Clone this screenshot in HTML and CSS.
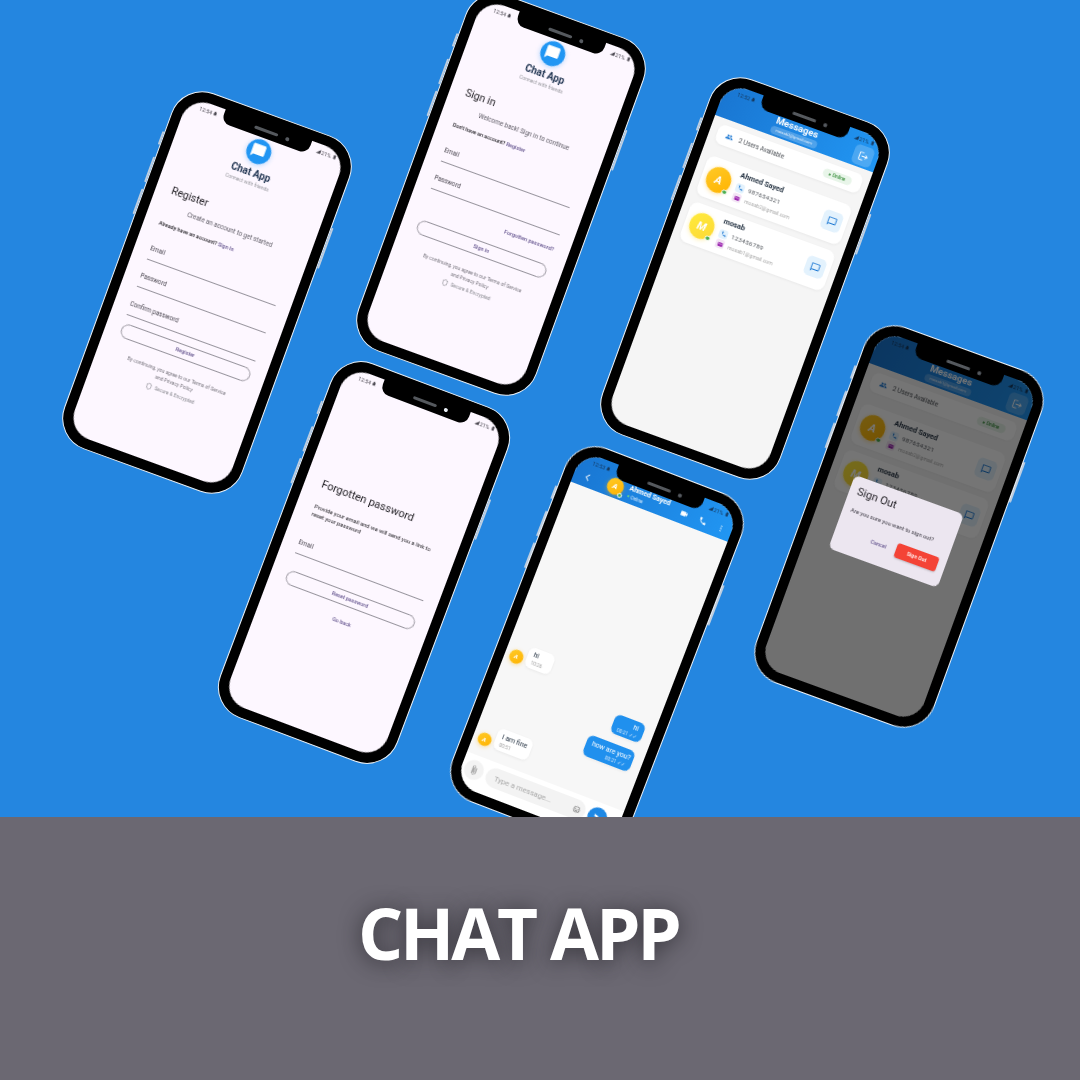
FILE: index.html
```html
<!DOCTYPE html>
<html lang="en">
<head>
    <meta charset="UTF-8">
    <title>Chat App</title>
    <link rel="stylesheet" href="styles.css">
</head>
<body>
    <!-- shared icons -->
    <svg class="icon-defs" xmlns="http://www.w3.org/2000/svg">
        <symbol id="i-bubble" viewBox="0 0 24 24"><path d="M20 2H4c-1.1 0-2 .9-2 2v18l4-4h14c1.1 0 2-.9 2-2V4c0-1.1-.9-2-2-2z"/></symbol>
        <symbol id="i-chat" viewBox="0 0 24 24"><path d="M20 2H4c-1.1 0-2 .9-2 2v18l4-4h14c1.1 0 2-.9 2-2V4c0-1.1-.9-2-2-2zm0 14H6l-2 2V4h16v12z"/></symbol>
        <symbol id="i-logout" viewBox="0 0 24 24"><path d="M17 7l-1.41 1.41L18.17 11H8v2h10.17l-2.58 2.58L17 17l5-5zM4 5h8V3H4c-1.1 0-2 .9-2 2v14c0 1.1.9 2 2 2h8v-2H4V5z"/></symbol>
        <symbol id="i-people" viewBox="0 0 24 24"><path d="M16 11c1.66 0 2.99-1.34 2.99-3S17.66 5 16 5c-1.66 0-3 1.34-3 3s1.34 3 3 3zm-8 0c1.66 0 2.99-1.34 2.99-3S9.66 5 8 5C6.34 5 5 6.34 5 8s1.34 3 3 3zm0 2c-2.33 0-7 1.17-7 3.5V19h14v-2.5c0-2.33-4.67-3.5-7-3.5zm8 0c-.29 0-.62.02-.97.05 1.16.84 1.97 1.97 1.97 3.45V19h6v-2.5c0-2.33-4.67-3.5-7-3.5z"/></symbol>
        <symbol id="i-phone" viewBox="0 0 24 24"><path d="M6.62 10.79c1.44 2.83 3.76 5.14 6.59 6.59l2.2-2.2c.27-.27.67-.36 1.02-.24 1.12.37 2.33.57 3.57.57.55 0 1 .45 1 1V20c0 .55-.45 1-1 1-9.39 0-17-7.61-17-17 0-.55.45-1 1-1h3.5c.55 0 1 .45 1 1 0 1.25.2 2.45.57 3.57.11.35.03.74-.25 1.02l-2.2 2.2z"/></symbol>
        <symbol id="i-mail" viewBox="0 0 24 24"><path d="M20 4H4c-1.1 0-1.99.9-1.99 2L2 18c0 1.1.9 2 2 2h16c1.1 0 2-.9 2-2V6c0-1.1-.9-2-2-2zm0 4l-8 5-8-5V6l8 5 8-5v2z"/></symbol>
        <symbol id="i-video" viewBox="0 0 24 24"><path d="M17 10.5V7c0-.55-.45-1-1-1H4c-.55 0-1 .45-1 1v10c0 .55.45 1 1 1h12c.55 0 1-.45 1-1v-3.5l4 4v-11l-4 4z"/></symbol>
        <symbol id="i-more" viewBox="0 0 24 24"><circle cx="12" cy="5" r="2"/><circle cx="12" cy="12" r="2"/><circle cx="12" cy="19" r="2"/></symbol>
        <symbol id="i-back" viewBox="0 0 24 24"><path d="M15.5 3.5 7 12l8.5 8.5-1.8 1.8L3.4 12 13.7 1.7z"/></symbol>
        <symbol id="i-attach" viewBox="0 0 24 24"><path d="M16.5 6v11.5c0 2.21-1.79 4-4 4s-4-1.79-4-4V5c0-1.38 1.12-2.5 2.5-2.5s2.5 1.12 2.5 2.5v10.5c0 .55-.45 1-1 1s-1-.45-1-1V6H10v9.5c0 1.38 1.12 2.5 2.5 2.5s2.5-1.12 2.5-2.5V5c0-2.21-1.79-4-4-4S7 2.79 7 5v12.5c0 3.04 2.46 5.5 5.5 5.5s5.5-2.46 5.5-5.5V6h-1.5z"/></symbol>
        <symbol id="i-smile" viewBox="0 0 24 24"><path d="M12 2a10 10 0 1 0 0 20 10 10 0 0 0 0-20zm0 18a8 8 0 1 1 0-16 8 8 0 0 1 0 16z"/><circle cx="8.5" cy="9.5" r="1.5"/><circle cx="15.5" cy="9.5" r="1.5"/><path d="M12 17.5c2.3 0 4.3-1.5 5.1-3.5H6.9c.8 2 2.8 3.5 5.1 3.5z"/></symbol>
        <symbol id="i-send" viewBox="0 0 24 24"><path d="M2.01 21 23 12 2.01 3 2 10l15 2-15 2z"/></symbol>
        <symbol id="i-shield" viewBox="0 0 24 24"><path d="M12 1 3 5v6c0 5.55 3.84 10.74 9 12 5.16-1.26 9-6.45 9-12V5l-9-4zm0 2.2 7 3.1V11c0 4.5-3 8.7-7 9.9-4-1.2-7-5.4-7-9.9V6.3z"/></symbol>
        <symbol id="i-bell" viewBox="0 0 24 24"><path d="M12 22c1.1 0 2-.9 2-2h-4c0 1.1.9 2 2 2zm6-6v-5c0-3.07-1.63-5.64-4.5-6.32V4c0-.83-.67-1.5-1.5-1.5s-1.5.67-1.5 1.5v.68C7.64 5.36 6 7.92 6 11v5l-2 2v1h16v-1l-2-2z"/></symbol>
        <symbol id="i-signal" viewBox="0 0 24 24"><path d="M2 22 22 2v20z"/></symbol>
        <symbol id="i-battery" viewBox="0 0 24 24"><path d="M15.67 4H14V2h-4v2H8.33C7.6 4 7 4.6 7 5.33v15.33C7 21.4 7.6 22 8.33 22h7.33c.74 0 1.34-.6 1.34-1.33V5.33C17 4.6 16.4 4 15.67 4z"/></symbol>
    </svg>

    <div class="canvas">

        <!-- register -->
        <div class="phone phone-register">
            <span class="side-btn side-mute"></span><span class="side-btn side-up"></span><span class="side-btn side-down"></span><span class="side-btn side-power"></span>
            <div class="notch"><span class="speaker"></span><span class="camera"></span></div>
            <div class="screen auth">
                <div class="status"><span class="status-item">12:54 <svg class="ico"><use href="#i-bell"/></svg></span><span class="status-item"><svg class="ico"><use href="#i-signal"/></svg> 21% <svg class="ico"><use href="#i-battery"/></svg></span></div>
                <div class="brand">
                    <div class="logo"><svg><use href="#i-bubble"/></svg></div>
                    <div class="brand-name">Chat App</div>
                    <div class="brand-sub">Connect with friends</div>
                </div>
                <div class="auth-title">Register</div>
                <div class="auth-sub">Create an account to get started</div>
                <div class="auth-switch">Already have an account? <a>Sign In</a></div>
                <div class="fields">
                    <div class="field">Email</div>
                    <div class="field">Password</div>
                    <div class="field">Confirm password</div>
                </div>
                <div class="outline-btn btn-register">Register</div>
                <div class="terms terms-register">By continuing, you agree to our Terms of Service<br>and Privacy Policy</div>
                <div class="secure"><svg class="ico"><use href="#i-shield"/></svg> Secure &amp; Encrypted</div>
            </div>
        </div>

        <!-- sign in -->
        <div class="phone phone-signin">
            <span class="side-btn side-mute"></span><span class="side-btn side-up"></span><span class="side-btn side-down"></span><span class="side-btn side-power"></span>
            <div class="notch"><span class="speaker"></span><span class="camera"></span></div>
            <div class="screen auth">
                <div class="status"><span class="status-item">12:54 <svg class="ico"><use href="#i-bell"/></svg></span><span class="status-item"><svg class="ico"><use href="#i-signal"/></svg> 21% <svg class="ico"><use href="#i-battery"/></svg></span></div>
                <div class="brand">
                    <div class="logo"><svg><use href="#i-bubble"/></svg></div>
                    <div class="brand-name">Chat App</div>
                    <div class="brand-sub">Connect with friends</div>
                </div>
                <div class="auth-title">Sign in</div>
                <div class="auth-sub">Welcome back! Sign in to continue</div>
                <div class="auth-switch">Don't have an account? <a>Register</a></div>
                <div class="fields">
                    <div class="field">Email</div>
                    <div class="field">Password</div>
                </div>
                <div class="forgot-link">Forgotten password?</div>
                <div class="outline-btn btn-signin">Sign in</div>
                <div class="terms terms-signin">By continuing, you agree to our Terms of Service<br>and Privacy Policy</div>
                <div class="secure secure-signin"><svg class="ico"><use href="#i-shield"/></svg> Secure &amp; Encrypted</div>
            </div>
        </div>

        <!-- messages -->
        <div class="phone phone-messages">
            <span class="side-btn side-mute"></span><span class="side-btn side-up"></span><span class="side-btn side-down"></span><span class="side-btn side-power"></span>
            <div class="notch"><span class="speaker"></span><span class="camera"></span></div>
            <div class="screen list">
                <div class="app-head">
                    <div class="status"><span class="status-item">12:52 <svg class="ico"><use href="#i-bell"/></svg></span><span class="status-item"><svg class="ico"><use href="#i-signal"/></svg> 21% <svg class="ico"><use href="#i-battery"/></svg></span></div>
                    <div class="head-row">
                        <span></span>
                        <div class="head-center">
                            <div class="head-title">Messages</div>
                            <div class="head-chip">mosab2@gmail.com</div>
                        </div>
                        <div class="exit-btn"><svg><use href="#i-logout"/></svg></div>
                    </div>
                </div>
                <div class="users-bar"><svg class="ico users-ico"><use href="#i-people"/></svg><span class="users-text">2 Users Available</span><span class="online-pill">● Online</span></div>
                <div class="user-card">
                    <div class="avatar avatar-amber">A<i class="dot"></i></div>
                    <div class="user-info">
                        <div class="user-name">Ahmed Sayed</div>
                        <div class="user-row"><span class="mini-box box-blue"><svg class="ico"><use href="#i-phone"/></svg></span><span class="user-phone">987654321</span></div>
                        <div class="user-row"><span class="mini-box box-purple"><svg class="ico"><use href="#i-mail"/></svg></span><span class="user-mail">mosab2@gmail.com</span></div>
                    </div>
                    <div class="chat-btn"><svg><use href="#i-chat"/></svg></div>
                </div>
                <div class="user-card">
                    <div class="avatar avatar-yellow">M<i class="dot"></i></div>
                    <div class="user-info">
                        <div class="user-name">mosab</div>
                        <div class="user-row"><span class="mini-box box-blue"><svg class="ico"><use href="#i-phone"/></svg></span><span class="user-phone">123456789</span></div>
                        <div class="user-row"><span class="mini-box box-purple"><svg class="ico"><use href="#i-mail"/></svg></span><span class="user-mail">mosab1@gmail.com</span></div>
                    </div>
                    <div class="chat-btn"><svg><use href="#i-chat"/></svg></div>
                </div>
            </div>
        </div>

        <!-- forgotten password -->
        <div class="phone phone-forgot">
            <span class="side-btn side-mute"></span><span class="side-btn side-up"></span><span class="side-btn side-down"></span><span class="side-btn side-power"></span>
            <div class="notch"><span class="speaker"></span><span class="camera camera-light"></span></div>
            <div class="screen auth">
                <div class="status"><span class="status-item">12:54 <svg class="ico"><use href="#i-bell"/></svg></span><span class="status-item"><svg class="ico"><use href="#i-signal"/></svg> 21% <svg class="ico"><use href="#i-battery"/></svg></span></div>
                <div class="auth-title forgot-title">Forgotten password</div>
                <div class="forgot-text">Provide your email and we will send you a link to<br>reset your password</div>
                <div class="field">Email</div>
                <div class="outline-btn btn-reset">Reset password</div>
                <div class="go-back">Go back</div>
            </div>
        </div>

        <!-- chat -->
        <div class="phone phone-chat">
            <span class="side-btn side-mute"></span><span class="side-btn side-up"></span><span class="side-btn side-down"></span><span class="side-btn side-power"></span>
            <div class="notch"><span class="speaker"></span><span class="camera"></span></div>
            <div class="screen chat">
                <div class="app-head">
                    <div class="status"><span class="status-item">12:53 <svg class="ico"><use href="#i-bell"/></svg></span><span class="status-item"><svg class="ico"><use href="#i-signal"/></svg> 21% <svg class="ico"><use href="#i-battery"/></svg></span></div>
                    <div class="chat-bar">
                        <svg class="ico bar-back"><use href="#i-back"/></svg>
                        <div class="avatar avatar-amber avatar-bar">A<i class="dot"></i></div>
                        <div class="chat-peer">
                            <div class="peer-name">Ahmed Sayed</div>
                            <div class="peer-state"><i></i> Online</div>
                        </div>
                        <svg class="ico bar-video"><use href="#i-video"/></svg>
                        <svg class="ico bar-phone"><use href="#i-phone"/></svg>
                        <svg class="ico bar-more"><use href="#i-more"/></svg>
                    </div>
                </div>
                <div class="msgs">
                    <div class="msg-in msg-first">
                        <div class="avatar avatar-amber avatar-msg">A</div>
                        <div class="bubble bubble-in bubble-w-hi"><span>hi</span><small>10:26</small></div>
                    </div>
                    <div class="msg-out msg-second">
                        <div class="bubble bubble-out bubble-w-sent"><span>hi</span><small>00:21 ✓✓</small></div>
                    </div>
                    <div class="msg-out msg-third">
                        <div class="bubble bubble-out bubble-w-how"><span>how are you?</span><small>00:21 ✓✓</small></div>
                    </div>
                    <div class="msg-in msg-fourth">
                        <div class="avatar avatar-amber avatar-msg">A</div>
                        <div class="bubble bubble-in bubble-w-fine"><span>I am fine</span><small>00:51</small></div>
                    </div>
                </div>
                <div class="composer">
                    <div class="round-btn"><svg class="ico"><use href="#i-attach"/></svg></div>
                    <div class="composer-input"><span>Type a message...</span><svg class="ico"><use href="#i-smile"/></svg></div>
                    <div class="send-btn"><svg class="ico"><use href="#i-send"/></svg></div>
                </div>
            </div>
        </div>

        <!-- sign out dialog -->
        <div class="phone phone-signout">
            <span class="side-btn side-mute"></span><span class="side-btn side-up"></span><span class="side-btn side-down"></span><span class="side-btn side-power"></span>
            <div class="notch"><span class="speaker"></span><span class="camera"></span></div>
            <div class="screen list">
                <div class="app-head">
                    <div class="status"><span class="status-item">12:54 <svg class="ico"><use href="#i-bell"/></svg></span><span class="status-item"><svg class="ico"><use href="#i-signal"/></svg> 21% <svg class="ico"><use href="#i-battery"/></svg></span></div>
                    <div class="head-row">
                        <span></span>
                        <div class="head-center">
                            <div class="head-title">Messages</div>
                            <div class="head-chip">mosab1@gmail.com</div>
                        </div>
                        <div class="exit-btn"><svg><use href="#i-logout"/></svg></div>
                    </div>
                </div>
                <div class="users-bar"><svg class="ico users-ico"><use href="#i-people"/></svg><span class="users-text">2 Users Available</span><span class="online-pill">● Online</span></div>
                <div class="user-card">
                    <div class="avatar avatar-amber">A<i class="dot"></i></div>
                    <div class="user-info">
                        <div class="user-name">Ahmed Sayed</div>
                        <div class="user-row"><span class="mini-box box-blue"><svg class="ico"><use href="#i-phone"/></svg></span><span class="user-phone">987654321</span></div>
                        <div class="user-row"><span class="mini-box box-purple"><svg class="ico"><use href="#i-mail"/></svg></span><span class="user-mail">mosab2@gmail.com</span></div>
                    </div>
                    <div class="chat-btn"><svg><use href="#i-chat"/></svg></div>
                </div>
                <div class="user-card">
                    <div class="avatar avatar-yellow">M<i class="dot"></i></div>
                    <div class="user-info">
                        <div class="user-name">mosab</div>
                        <div class="user-row"><span class="mini-box box-blue"><svg class="ico"><use href="#i-phone"/></svg></span><span class="user-phone">123456789</span></div>
                        <div class="user-row"><span class="mini-box box-purple"><svg class="ico"><use href="#i-mail"/></svg></span><span class="user-mail">mosab1@gmail.com</span></div>
                    </div>
                    <div class="chat-btn"><svg><use href="#i-chat"/></svg></div>
                </div>
                <div class="scrim">
                    <div class="dialog">
                        <div class="dialog-title">Sign Out</div>
                        <div class="dialog-text">Are you sure you want to sign out?</div>
                        <div class="dialog-actions">
                            <span class="dialog-cancel">Cancel</span>
                            <span class="dialog-ok">Sign Out</span>
                        </div>
                    </div>
                </div>
            </div>
        </div>
    </div>

    <div class="banner">
        <h1>CHAT APP</h1>
    </div>
</body>
</html>
```
FILE: styles.css
```css
* {
    box-sizing: border-box;
}
body {
    margin: 0;
    width: 1080px;
    height: 1080px;
    overflow: hidden;
    background: #2486e0;
    font-family: Roboto, 'Liberation Sans', sans-serif;
}
.icon-defs {
    display: none;
}
.canvas {
    position: relative;
    height: 817px;
    overflow: hidden;
}
.banner {
    height: 263px;
    background: #6b6872;
    padding: 76px 0 0 358px;
}
.banner h1 {
    margin: 0;
    color: #fff;
    font-family: 'Open Sans', sans-serif;
    font-size: 71px;
    line-height: 80px;
    font-weight: 700;
    letter-spacing: -3.2px;
    text-shadow: 0 2px 22px rgba(30, 28, 34, 0.75);
}

/* phone shell */
.phone {
    position: absolute;
    width: 190px;
    height: 379px;
    padding: 10px;
    background: #000;
    border: 1px solid #eaf0f6;
    border-radius: 33px;
    transform: rotate(20deg);
}
.phone-register { left: 112px; top: 103px; }
.phone-signin { left: 406px; top: 5px; }
.phone-messages { left: 650px; top: 89px; }
.phone-forgot { left: 269px; top: 373px; transform: rotate(20.6deg); }
.phone-chat { left: 502px; top: 458px; transform: rotate(21deg); }
.phone-signout { left: 804px; top: 337px; }

.side-btn {
    position: absolute;
    width: 2px;
    background: #bccde0;
    border-radius: 1px;
}
.side-mute { left: -3px; top: 52px; height: 14px; }
.side-up { left: -3px; top: 79px; height: 27px; }
.side-down { left: -3px; top: 113px; height: 27px; }
.side-power { right: -3px; top: 85px; height: 43px; }

.notch {
    position: absolute;
    z-index: 3;
    left: 49px;
    top: 8px;
    width: 92px;
    height: 16px;
    background: #000;
    border-radius: 0 0 9px 9px;
}
.speaker {
    position: absolute;
    left: 33px;
    top: 7px;
    width: 25px;
    height: 2.5px;
    border-radius: 2px;
    background: #55595e;
}
.camera {
    position: absolute;
    left: 66px;
    top: 7px;
    width: 4px;
    height: 4px;
    border-radius: 50%;
    background: #565a60;
}
.camera-light {
    background: #e8eef5;
}
.screen {
    position: relative;
    height: 100%;
    overflow: hidden;
    border-radius: 23px;
    display: flex;
    flex-direction: column;
    filter: blur(0.3px);
}
.ico {
    width: 1em;
    height: 1em;
    fill: currentColor;
    flex: none;
}

/* status bar */
.status {
    height: 15px;
    padding: 0 8px 0 14px;
    flex: none;
    display: flex;
    justify-content: space-between;
    align-items: center;
    font-size: 5.3px;
    color: #4a4750;
}
.status-item {
    display: flex;
    align-items: center;
    gap: 1px;
}

/* register / sign in / forgot */
.auth {
    background: #fdf7ff;
    color: #1d1b20;
}
.brand {
    display: flex;
    flex-direction: column;
    align-items: center;
}
.logo {
    width: 25px;
    height: 25px;
    margin-top: 0.5px;
    border-radius: 50%;
    background: #2196f3;
    box-shadow: 0 1px 5px rgba(33, 150, 243, 0.35);
    display: flex;
    align-items: center;
    justify-content: center;
}
.logo svg {
    width: 16px;
    height: 16px;
    fill: #fff;
}
.brand-name {
    margin-top: 4.5px;
    font-size: 10px;
    line-height: 12px;
    font-weight: 700;
    color: #1f3350;
}
.brand-sub {
    margin-top: 1.3px;
    font-size: 5px;
    line-height: 7px;
    color: #97979d;
}
.auth-title {
    margin: 23px 0 0 16px;
    font-size: 10.5px;
    line-height: 13px;
}
.auth-sub {
    margin-top: 7px;
    text-align: center;
    font-size: 6.3px;
    line-height: 8px;
    color: #5c5963;
}
.auth-switch {
    margin: 9.6px 0 0 15px;
    font-size: 5.4px;
    line-height: 7px;
    font-weight: 500;
}
.auth-switch a,
.forgot-link,
.outline-btn,
.go-back,
.dialog-cancel {
    color: #65558f;
}
.fields {
    margin-top: 5.5px;
}
.field {
    height: 29.5px;
    margin: 0 15.5px;
    padding-top: 13.5px;
    border-bottom: 0.7px solid #98959e;
    font-size: 6.3px;
    line-height: 8px;
    color: #49454f;
}
.outline-btn {
    height: 15px;
    margin: 8.5px 15.5px 0;
    border: 0.7px solid #98959e;
    border-radius: 8px;
    text-align: center;
    font-size: 5.4px;
    line-height: 13.6px;
    font-weight: 500;
}
.terms {
    margin-top: 12.5px;
    text-align: center;
    font-size: 4.9px;
    line-height: 8px;
    color: #77747d;
}
.secure {
    margin-top: 4.5px;
    display: flex;
    justify-content: center;
    align-items: center;
    gap: 2px;
    font-size: 4.9px;
    line-height: 7px;
    color: #8b8b92;
}
.secure .ico {
    font-size: 7px;
}
.forgot-link {
    margin: 12px 15.5px 0 0;
    text-align: right;
    font-size: 5.6px;
    line-height: 7px;
    font-weight: 500;
}
.btn-signin {
    margin-top: 13px;
}
.terms-signin {
    margin-top: 13.5px;
}
.secure-signin {
    margin-top: 3.5px;
}
.forgot-title {
    margin: 97.5px 0 0 17px;
    font-size: 11px;
}
.forgot-text {
    margin: 14.7px 0 0 18px;
    font-size: 5.8px;
    line-height: 7.5px;
    color: #1d1b20;
}
.phone-forgot .field {
    margin-top: 9.5px;
}
.btn-reset {
    margin-top: 16.5px;
}
.go-back {
    margin-top: 13px;
    text-align: center;
    font-size: 5.4px;
    line-height: 7px;
    font-weight: 500;
}

/* blue app header */
.app-head {
    flex: none;
    background: linear-gradient(100deg, #1976d2, #2196f3);
    color: #fff;
}
.app-head .status {
    margin-bottom: -2.5px;
    color: #16395f;
}
.head-row {
    height: 22px;
    padding-right: 5px;
    display: grid;
    grid-template-columns: 1fr auto 1fr;
}
.head-center {
    display: flex;
    flex-direction: column;
    align-items: center;
}
.head-title {
    font-size: 9.6px;
    line-height: 11px;
    font-weight: 700;
}
.head-chip {
    margin-top: 1.5px;
    height: 8px;
    padding: 0 5px;
    border-radius: 4px;
    background: rgba(255, 255, 255, 0.22);
    font-size: 4.2px;
    line-height: 8px;
    color: #e6f1fc;
}
.exit-btn {
    justify-self: end;
    width: 20px;
    height: 20px;
    margin-top: 0.5px;
    border-radius: 5px;
    background: rgba(255, 255, 255, 0.2);
    display: flex;
    align-items: center;
    justify-content: center;
}
.exit-btn svg {
    width: 11px;
    height: 11px;
    fill: #fff;
}

/* user list */
.list {
    background: #f5f5f5;
    color: #1f2d3d;
}
.users-bar {
    height: 20px;
    margin: 6.5px 7.5px 0;
    padding: 0 10px 0 9px;
    background: #fff;
    border-radius: 7px;
    box-shadow: 0 1px 3px rgba(0, 0, 0, 0.05);
    display: flex;
    align-items: center;
}
.users-ico {
    font-size: 8px;
    color: #1976d2;
}
.users-text {
    margin-left: 6.5px;
    font-size: 6.3px;
    color: #4b4f55;
}
.online-pill {
    margin-left: auto;
    width: 30px;
    height: 9px;
    border-radius: 5px;
    background: #e8f5e9;
    color: #3a8f3e;
    text-align: center;
    font-size: 4.8px;
    line-height: 9px;
    font-weight: 500;
}
.user-card {
    height: 42px;
    margin: 7px 7.5px 0;
    padding: 0 4.5px 0 5px;
    background: #fff;
    border-radius: 8px;
    box-shadow: 0 1px 3px rgba(0, 0, 0, 0.05);
    display: flex;
    align-items: center;
}
.users-bar + .user-card {
    margin-top: 13px;
}
.avatar {
    position: relative;
    flex: none;
    width: 25.6px;
    height: 25.6px;
    border-radius: 50%;
    color: #fff;
    font-size: 11px;
    font-weight: 700;
    font-style: italic;
    display: flex;
    align-items: center;
    justify-content: center;
}
.avatar-amber {
    background: linear-gradient(135deg, #ffca28, #ffb300);
    box-shadow: 0 1px 4px rgba(255, 179, 0, 0.4);
}
.avatar-yellow {
    background: linear-gradient(135deg, #ffeb3b, #fdd835);
    box-shadow: 0 1px 4px rgba(253, 216, 53, 0.4);
}
.dot {
    position: absolute;
    right: 0.5px;
    bottom: 0.5px;
    width: 5.5px;
    height: 5.5px;
    border-radius: 50%;
    background: #4caf50;
    border: 0.8px solid #fff;
}
.user-info {
    margin-left: 6.4px;
}
.user-name {
    font-size: 7.4px;
    line-height: 9px;
    font-weight: 700;
    margin-bottom: 3.5px;
}
.user-row {
    height: 9px;
    margin-bottom: 1.5px;
    display: flex;
    align-items: center;
    gap: 3.5px;
}
.mini-box {
    width: 9px;
    height: 9px;
    border-radius: 2.5px;
    font-size: 6px;
    display: flex;
    align-items: center;
    justify-content: center;
}
.box-blue {
    background: #e3f2fd;
    color: #1976d2;
}
.box-purple {
    background: #f3e5f5;
    color: #9c27b0;
}
.user-phone {
    font-size: 6.2px;
    letter-spacing: 0.3px;
    color: #55595f;
}
.user-mail {
    font-size: 5.2px;
    color: #a8a8a8;
}
.chat-btn {
    margin-left: auto;
    width: 20px;
    height: 20px;
    border-radius: 5px;
    background: #e3f2fd;
    display: flex;
    align-items: center;
    justify-content: center;
}
.chat-btn svg {
    width: 10.5px;
    height: 10.5px;
    fill: #1976d2;
}

/* sign out dialog */
.scrim {
    position: absolute;
    inset: 0;
    padding-top: 145px;
    padding-right: 2px;
    background: rgba(0, 0, 0, 0.54);
    display: flex;
    justify-content: center;
    align-items: flex-start;
}
.dialog {
    width: 116px;
    height: 78px;
    padding: 8px 8px 0;
    background: #ece6f0;
    border-radius: 6px;
    color: #1d1b20;
}
.dialog-title {
    font-size: 11px;
    line-height: 13px;
}
.dialog-text {
    margin-top: 9px;
    font-size: 5.8px;
    line-height: 8px;
    color: #3b3842;
    white-space: nowrap;
}
.dialog-actions {
    margin-top: 11px;
    display: flex;
    justify-content: flex-end;
    align-items: center;
    gap: 10px;
}
.dialog-cancel {
    font-size: 5.4px;
    font-weight: 500;
}
.dialog-ok {
    width: 44px;
    height: 15px;
    border-radius: 3px;
    background: #f44336;
    box-shadow: 0 1px 2px rgba(0, 0, 0, 0.2);
    color: #fff;
    text-align: center;
    font-size: 5.4px;
    line-height: 15px;
    font-weight: 500;
}

/* chat */
.chat {
    background: #f7f7f7;
    color: #1f2d3d;
}
.chat-bar {
    height: 20.5px;
    padding-right: 6px;
    display: flex;
    align-items: center;
    position: relative;
}
.bar-back {
    margin-left: 11px;
    font-size: 8px;
    color: #fff;
}
.avatar-bar {
    width: 17px;
    height: 17px;
    margin: 0 0 0 15.5px;
    align-self: flex-start;
    font-size: 8px;
}
.avatar-bar .dot {
    right: -1px;
    bottom: -1px;
    width: 5px;
    height: 5px;
}
.chat-peer {
    margin: 1px 0 0 6px;
    align-self: flex-start;
}
.peer-name {
    font-size: 7px;
    line-height: 9px;
    font-weight: 700;
    white-space: nowrap;
}
.peer-state {
    font-size: 4.6px;
    line-height: 7px;
    color: #d8ecfd;
    display: flex;
    align-items: center;
    gap: 1.5px;
}
.peer-state i {
    width: 2.5px;
    height: 2.5px;
    border-radius: 50%;
    background: #6fdc78;
}
.bar-video {
    margin-left: 12.5px;
    font-size: 9px;
}
.bar-phone {
    margin-left: 11px;
    font-size: 9px;
}
.bar-more {
    margin-left: 10.5px;
    font-size: 8px;
}
.msgs {
    flex: 1;
    padding-bottom: 12px;
    display: flex;
    flex-direction: column;
    justify-content: flex-end;
}
.msg-in {
    padding-left: 5px;
    display: flex;
    align-items: flex-end;
    gap: 3px;
}
.msg-out {
    padding-right: 10px;
    display: flex;
    justify-content: flex-end;
}
.msg-second { margin-top: 11.5px; }
.msg-third { margin-top: 9px; }
.msg-fourth { margin-top: 4px; }
.avatar-msg {
    width: 13.5px;
    height: 13.5px;
    font-size: 6px;
    margin-bottom: -1px;
}
.bubble {
    padding: 0 6px;
    border-radius: 6px;
    display: flex;
    flex-direction: column;
    justify-content: center;
    box-shadow: 0 1px 3px rgba(0, 0, 0, 0.06);
    white-space: nowrap;
}
.bubble span {
    font-size: 7px;
    line-height: 10px;
}
.bubble small {
    font-size: 4.8px;
    line-height: 7px;
}
.bubble-in {
    background: #fff;
}
.bubble-in small {
    color: #a0a0a0;
}
.bubble-out {
    background: #2090ee;
    color: #fff;
    text-align: right;
}
.bubble-out small {
    color: #cfe6fb;
}
.bubble-w-hi { width: 27px; height: 21px; }
.bubble-w-fine { width: 37px; height: 22px; }
.bubble-w-sent { width: 32px; height: 20px; }
.bubble-w-how { width: 50px; height: 22px; }
.composer {
    height: 35px;
    flex: none;
    padding: 5px 0 0 3px;
    background: #fff;
    display: flex;
    align-items: flex-start;
    gap: 3px;
}
.round-btn {
    width: 20px;
    height: 20px;
    border-radius: 50%;
    background: #f3f3f3;
    color: #777;
    font-size: 10px;
    display: flex;
    align-items: center;
    justify-content: center;
}
.composer-input {
    width: 106px;
    height: 20px;
    padding: 0 5px 0 9px;
    border-radius: 10px;
    background: #f3f3f3;
    display: flex;
    align-items: center;
    justify-content: space-between;
    font-size: 7.6px;
    color: #a8a8a8;
}
.composer-input .ico {
    font-size: 8px;
    color: #666;
}
.send-btn {
    width: 20px;
    height: 20px;
    border-radius: 50%;
    background: #1e88e5;
    color: #fff;
    font-size: 9px;
    display: flex;
    align-items: center;
    justify-content: center;
}
```
